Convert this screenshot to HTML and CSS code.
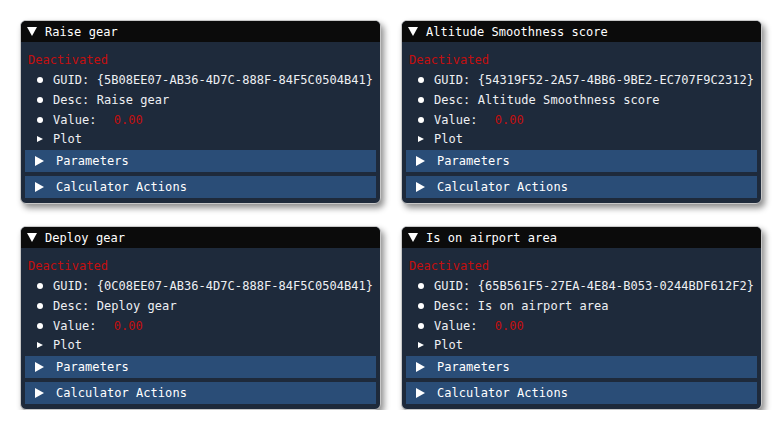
FILE: index.html
```html
<!DOCTYPE html>
<html lang="en">
<head>
    <meta charset="UTF-8">
    <title>Calculators</title>
    <link rel="stylesheet" href="styles.css">
</head>
<body>
    <div class="grid">
        <div class="panel">
            <div class="panel-head"><span class="tri-down"></span>Raise gear</div>
            <div class="panel-body">
                <div class="status">Deactivated</div>
                <ul class="props">
                    <li>GUID: {5B08EE07-AB36-4D7C-888F-84F5C0504B41}</li>
                    <li>Desc: Raise gear</li>
                    <li>Value:<span class="val">0.00</span></li>
                </ul>
                <div class="plot"><span class="tri-small"></span>Plot</div>
                <div class="section"><span class="tri-right"></span>Parameters</div>
                <div class="section"><span class="tri-right"></span>Calculator Actions</div>
            </div>
        </div>

        <div class="panel">
            <div class="panel-head"><span class="tri-down"></span>Altitude Smoothness score</div>
            <div class="panel-body">
                <div class="status">Deactivated</div>
                <ul class="props">
                    <li>GUID: {54319F52-2A57-4BB6-9BE2-EC707F9C2312}</li>
                    <li>Desc: Altitude Smoothness score</li>
                    <li>Value:<span class="val">0.00</span></li>
                </ul>
                <div class="plot"><span class="tri-small"></span>Plot</div>
                <div class="section"><span class="tri-right"></span>Parameters</div>
                <div class="section"><span class="tri-right"></span>Calculator Actions</div>
            </div>
        </div>

        <div class="panel">
            <div class="panel-head"><span class="tri-down"></span>Deploy gear</div>
            <div class="panel-body">
                <div class="status">Deactivated</div>
                <ul class="props">
                    <li>GUID: {0C08EE07-AB36-4D7C-888F-84F5C0504B41}</li>
                    <li>Desc: Deploy gear</li>
                    <li>Value:<span class="val">0.00</span></li>
                </ul>
                <div class="plot"><span class="tri-small"></span>Plot</div>
                <div class="section"><span class="tri-right"></span>Parameters</div>
                <div class="section"><span class="tri-right"></span>Calculator Actions</div>
            </div>
        </div>

        <div class="panel">
            <div class="panel-head"><span class="tri-down"></span>Is on airport area</div>
            <div class="panel-body">
                <div class="status">Deactivated</div>
                <ul class="props">
                    <li>GUID: {65B561F5-27EA-4E84-B053-0244BDF612F2}</li>
                    <li>Desc: Is on airport area</li>
                    <li>Value:<span class="val">0.00</span></li>
                </ul>
                <div class="plot"><span class="tri-small"></span>Plot</div>
                <div class="section"><span class="tri-right"></span>Parameters</div>
                <div class="section"><span class="tri-right"></span>Calculator Actions</div>
            </div>
        </div>
    </div>
</body>
</html>
```

FILE: styles.css
```css
body {
    margin: 0;
    padding: 20px 0 0 20px;
    background: #fff;
    font-family: "DejaVu Sans Mono", "Liberation Mono", monospace;
    font-size: 12px;
    letter-spacing: 0.05px;
    color: #eef0f3;
}
.grid {
    display: grid;
    grid-template-columns: 361px 361px;
    column-gap: 20px;
    row-gap: 22px;
}
.panel {
    border: 1px solid #c8c8c8;
    border-radius: 6px;
    background: #1e2a3b;
    overflow: hidden;
    box-shadow: 3px 4px 6px rgba(0, 0, 0, 0.45);
}
.panel-head {
    height: 21px;
    background: #0b0b0b;
    display: flex;
    align-items: center;
    padding-left: 6px;
    color: #fff;
}
.tri-down {
    width: 0;
    height: 0;
    border-left: 5px solid transparent;
    border-right: 5px solid transparent;
    border-top: 9px solid #fff;
    margin-right: 8px;
}
.panel-body {
    padding: 8px 4px 5px 4px;
}
.status {
    color: #c40f0f;
    height: 20px;
    line-height: 20px;
    padding-left: 3px;
}
.props {
    list-style: none;
    margin: 0;
    padding: 0;
}
.props li {
    height: 20px;
    line-height: 20px;
    display: flex;
    align-items: center;
    padding-left: 12px;
}
.props li::before {
    content: "";
    width: 6px;
    height: 6px;
    border-radius: 50%;
    background: #fff;
    margin-right: 10px;
}
.val {
    color: #c40f0f;
    margin-left: 17px;
}
.plot {
    height: 18px;
    display: flex;
    align-items: center;
    padding-left: 12px;
}
.tri-small {
    width: 0;
    height: 0;
    border-top: 3.5px solid transparent;
    border-bottom: 3.5px solid transparent;
    border-left: 6px solid #fff;
    margin-right: 10px;
}
.section {
    height: 22px;
    margin-top: 4px;
    background: #2a4d77;
    display: flex;
    align-items: center;
    padding-left: 10px;
    color: #fff;
}
.plot + .section {
    margin-top: 2px;
}
.tri-right {
    width: 0;
    height: 0;
    border-top: 5px solid transparent;
    border-bottom: 5px solid transparent;
    border-left: 9px solid #fff;
    margin-right: 12px;
}
```
